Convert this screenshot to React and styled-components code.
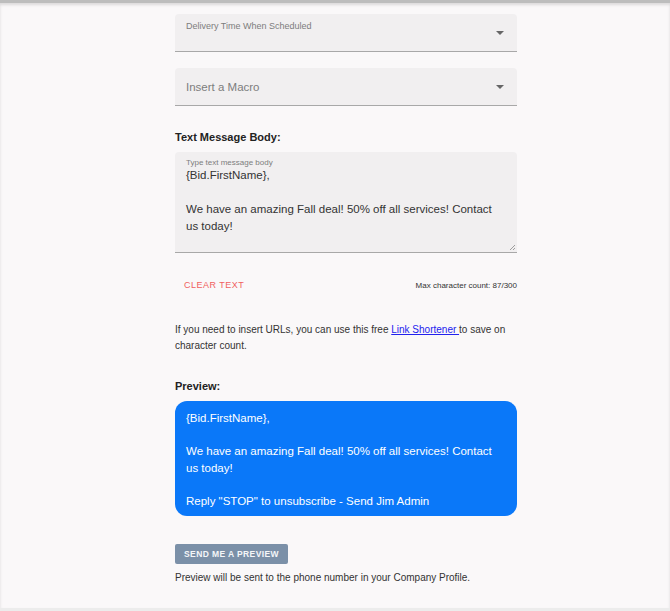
import React from 'react'
import styled, { createGlobalStyle } from 'styled-components'

const Global = createGlobalStyle`
  html, body { margin: 0; background: #faf8f9; }
  body { font-family: 'Liberation Sans', Arial, sans-serif; color: #222; }
`

const Page = styled.div`
  min-height: 611px;
  box-sizing: border-box;
  border-top: 3px solid #bdbdbd;
  border-bottom: 3px solid #ececec;
  box-shadow: inset 0 2px 3px rgba(0,0,0,0.12);
  display: flex;
  justify-content: center;
  padding: 11px 0 0 22px;
`

const Column = styled.div`
  width: 342px;
  display: flex;
  flex-direction: column;
`

const Select = styled.div`
  position: relative;
  height: 38px;
  background: #f1eff0;
  border-bottom: 1px solid #a8a8a8;
  border-radius: 4px 4px 0 0;
  margin-bottom: ${p => p.$mb || 0}px;
  box-sizing: border-box;
  padding: 0 11px;
  display: flex;
  align-items: ${p => (p.$small ? 'flex-start' : 'center')};
  padding-top: ${p => (p.$small ? '7px' : '0')};
  font-size: ${p => (p.$small ? '9px' : '11.5px')};
  color: #7d7d7d;
`

const Caret = styled.span`
  position: absolute;
  right: 13px;
  top: 17px;
  border-left: 4px solid transparent;
  border-right: 4px solid transparent;
  border-top: 4px solid #666;
`

const Heading = styled.div`
  font-size: 11px;
  font-weight: bold;
  color: #222;
  margin: ${p => p.$mt}px 0 9px;
`

const TextArea = styled.div`
  position: relative;
  background: #f1eff0;
  border-bottom: 1px solid #a8a8a8;
  border-radius: 4px 4px 0 0;
  height: 101px;
  box-sizing: border-box;
  padding: 6px 11px;
`

const Hint = styled.div`
  font-size: 8px;
  color: #7d7d7d;
`

const Body = styled.div`
  font-size: 11.5px;
  line-height: 17px;
  color: #333;
  white-space: pre-wrap;
`

const Grip = styled.svg`
  position: absolute;
  right: 1px;
  bottom: 1px;
`

const Row = styled.div`
  display: flex;
  justify-content: space-between;
  align-items: center;
  margin-top: 27px;
  padding-left: 9px;
`

const Clear = styled.span`
  font-size: 9px;
  letter-spacing: 0.5px;
  color: #f06060;
`

const Count = styled.span`
  font-size: 8px;
  color: #333;
`

const Para = styled.p`
  font-size: 10px;
  line-height: 16px;
  color: #333;
  margin: ${p => p.$mt}px 0 0;
  a { color: #2222ee; }
`

const Bubble = styled.div`
  background: #0a78f9;
  color: #fff;
  border-radius: 12px;
  padding: 9px 11px 7px;
  font-size: 11.5px;
  line-height: 16.5px;
  white-space: pre-wrap;
`

const Button = styled.div`
  align-self: flex-start;
  margin-top: 28px;
  background: #7b90a8;
  color: #f4f6f8;
  font-size: 8.5px;
  font-weight: bold;
  letter-spacing: 0.4px;
  padding: 5px 9px;
  border-radius: 2px;
`

const msg = `{Bid.FirstName},

We have an amazing Fall deal! 50% off all services! Contact us today!`

export default function App () {
  return (
    <Page>
      <Global />
      <Column>
        <Select $small $mb={16}>Delivery Time When Scheduled<Caret /></Select>
        <Select>Insert a Macro<Caret /></Select>
        <Heading $mt={25}>Text Message Body:</Heading>
        <TextArea>
          <Hint>Type text message body</Hint>
          <Body>{msg}</Body>
          <Grip width='7' height='7' viewBox='0 0 7 7'>
            <path d='M6 1L1 6M6 4L4 6' stroke='#888' strokeWidth='0.8' />
          </Grip>
        </TextArea>
        <Row>
          <Clear>CLEAR TEXT</Clear>
          <Count>Max character count: 87/300</Count>
        </Row>
        <Para $mt={32}>
          If you need to insert URLs, you can use this free <a href='#'>Link Shortener </a>to save on character count.
        </Para>
        <Heading $mt={26}>Preview:</Heading>
        <Bubble>{msg + '\n\nReply "STOP" to unsubscribe - Send Jim Admin'}</Bubble>
        <Button>SEND ME A PREVIEW</Button>
        <Para $mt={6}>Preview will be sent to the phone number in your Company Profile.</Para>
      </Column>
    </Page>
  )
}
